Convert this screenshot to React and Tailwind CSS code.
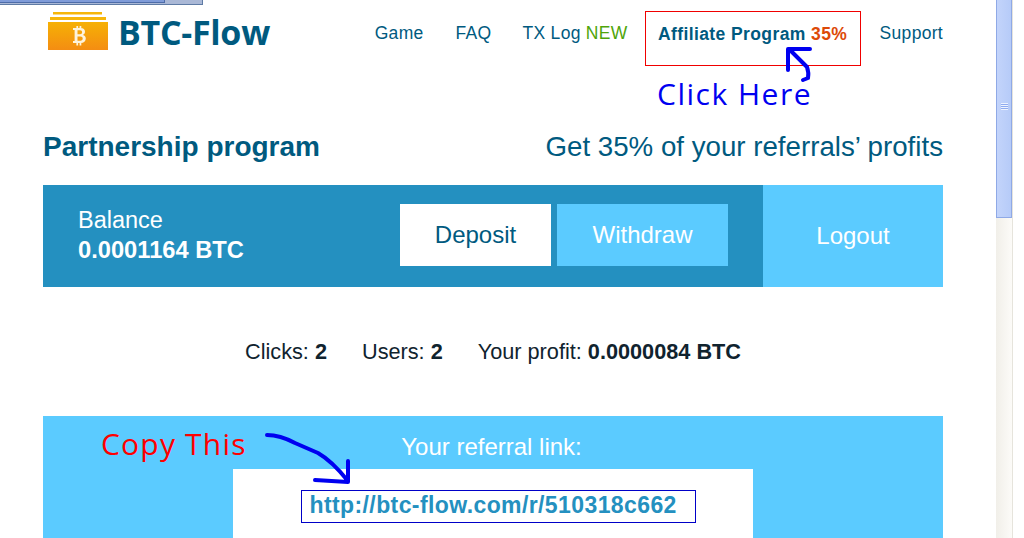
import React from 'react';

const NavLink = ({ children, className = '' }) => (
  <a className={`text-[17.5px] leading-[20px] text-[#005a7f] tracking-[0.3px] ${className}`}>{children}</a>
);

const Logo = () => (
  <div className="flex items-center">
    <svg width="60" height="39" viewBox="0 0 60 39">
      <defs>
        <linearGradient id="wallet" x1="0" y1="0" x2="0" y2="1">
          <stop offset="0" stopColor="#f6b104" />
          <stop offset="1" stopColor="#f48d12" />
        </linearGradient>
      </defs>
      <rect x="5" y="0" width="49" height="2.5" fill="#f6b60a" />
      <rect x="2" y="5" width="56" height="3" fill="#f6b60a" />
      <rect x="0" y="10" width="60" height="28" fill="url(#wallet)" />
      <path
        d="M25 16h7.5c3 0 4.5 1.6 4.5 3.8 0 1.5-.8 2.6-2 3.1 1.7.5 2.8 1.8 2.8 3.6 0 2.6-1.9 4.5-5 4.5H25v-2h1.6V18H25zM29.5 18.3v4h2.6c1.3 0 2-.8 2-2s-.7-2-2-2zM29.5 24.4v4.4h3c1.4 0 2.2-.9 2.2-2.2s-.8-2.2-2.2-2.2zM28.4 14h1.7v2h-1.7zM31.6 14h1.7v2h-1.7zM28.4 31h1.7v2.4h-1.7zM31.6 31h1.7v2.4h-1.7z"
        fill="#fdf3dc"
      />
    </svg>
    <span className="ml-[10px] text-[34px] leading-none font-bold text-[#005a7f] font-['Open_Sans',sans-serif] tracking-[-0.3px]">
      BTC-Flow
    </span>
  </div>
);

const Scrollbar = () => (
  <div className="w-[17px] h-full bg-gradient-to-r from-[#f1efe9] to-[#fcfbf8] border-r border-[#e6e4dc]">
    <div className="flex h-[218px] items-end justify-center bg-gradient-to-r from-[#c3d4fb] to-[#b6cbf8] border-x border-b border-[#8fa9e6]">
      <div className="mb-[107px] flex flex-col gap-[1px] bg-[#8fabf0]">
        <div className="h-[1px] w-[7px] bg-[#eef3fe]" />
        <div className="h-[1px] w-[7px] bg-[#eef3fe]" />
        <div className="h-[1px] w-[7px] bg-[#eef3fe]" />
        <div className="h-[1px] w-[7px] bg-[#eef3fe]" />
      </div>
    </div>
  </div>
);

export default function App() {
  return (
    <div className="relative flex h-[538px] w-[1024px] overflow-hidden bg-white font-['Liberation_Sans',Arial,sans-serif]">
      <main className="w-[996px] shrink-0 pl-[43px] pr-[53px]">
        {/* header */}
        <header className="flex h-[65px] items-start justify-between">
          <div className="ml-[5px] mt-[12px]">
            <Logo />
          </div>
          <nav className="flex items-start pt-[11px]">
            <NavLink className="mr-[32px] mt-[12px]">Game</NavLink>
            <NavLink className="mr-[31px] mt-[12px]">FAQ</NavLink>
            <NavLink className="mr-[17px] mt-[12px]">
              TX Log <span className="text-[#4fa50a]">NEW</span>
            </NavLink>
            <div className="flex h-[55px] w-[216px] items-center justify-center border border-[#f00000] pb-[10px]">
              <NavLink className="font-bold whitespace-nowrap tracking-[0.4px]">
                Affiliate Program <span className="text-[#dd4a08]">35%</span>
              </NavLink>
            </div>
            <NavLink className="ml-[19px] mt-[12px]">Support</NavLink>
          </nav>
        </header>

        <div className="mt-[62px] flex h-[40px] items-center justify-between text-[#005a7f]">
          <h1 className="text-[28px] font-bold">Partnership program</h1>
          <p className="text-[27.7px]">Get 35% of your referrals’ profits</p>
        </div>

        {/* balance bar */}
        <section className="mt-[18px] flex h-[102px] w-[900px]">
          <div className="flex w-[720px] items-start bg-[#2490c0] pl-[35px]">
            <div className="mt-[20px] w-[322px] text-white">
              <div className="text-[23.5px] leading-[30px]">Balance</div>
              <div className="text-[23.7px] leading-[30px] font-bold">0.0001164 BTC</div>
            </div>
            <button className="mt-[19px] h-[62px] w-[151px] bg-white text-[24px] text-[#005a7f]">Deposit</button>
            <button className="ml-[6px] mt-[19px] h-[62px] w-[171px] bg-[#5bcbff] text-[24px] text-white">Withdraw</button>
          </div>
          <button className="flex-1 bg-[#5bcbff] text-[24px] text-white">Logout</button>
        </section>

        <div className="mt-[52px] flex h-[26px] items-center justify-center gap-[35px] text-[21.7px] text-[#10232e]">
          <span>
            Clicks: <b>2</b>
          </span>
          <span>
            Users: <b>2</b>
          </span>
          <span>
            Your profit: <b>0.0000084 BTC</b>
          </span>
        </div>

        {/* referral link */}
        <section className="mt-[51px] flex h-[200px] w-[900px] flex-col items-center bg-[#5bcbff] pt-[18px]">
          <div className="mr-[3px] h-[35px] text-[24px] leading-[26px] text-white">Your referral link:</div>
          <div className="flex h-[100px] w-[520px] justify-center bg-white pt-[21px]">
            <div className="ml-[10px] flex h-[33px] w-[395px] items-center border border-[#0000c8] pb-[2px] pl-[8px] text-[23px] font-bold tracking-[0.4px] text-[#2490c0]">
              http://btc-flow.com/r/510318c662
            </div>
          </div>
        </section>
      </main>

      <Scrollbar />

      {/* window edge at top left */}
      <div className="absolute left-0 top-0 h-[5px] w-[203px] border-b border-r border-[#5f7ba5] bg-[#aab8d6]">
        <div className="h-[3px] w-[165px] border-b border-r border-[#4e6ca8] bg-[#7f9bd8]" />
      </div>

      {/* hand drawn notes */}
      <div className="absolute left-[657px] top-[76px] font-['Open_Sans',sans-serif] text-[30px] leading-[36px] tracking-[1.5px] text-[#0000f0]">
        Click Here
      </div>
      <div className="absolute left-[101px] top-[426px] font-['Open_Sans',sans-serif] text-[30px] leading-[36px] tracking-[1.2px] text-[#ff0000]">
        Copy This
      </div>
      <svg className="absolute left-0 top-0" width="1024" height="538" fill="none" stroke="#0000f0" strokeWidth="4" strokeLinecap="round" strokeLinejoin="round">
        <path d="M788 70V49H810M790 50L807 67Q809 73 808 78L803 80" />
        <path d="M267 435Q280 435 295 443L318 453Q332 461 348 481M348 461V482L315 480" />
      </svg>
    </div>
  );
}
